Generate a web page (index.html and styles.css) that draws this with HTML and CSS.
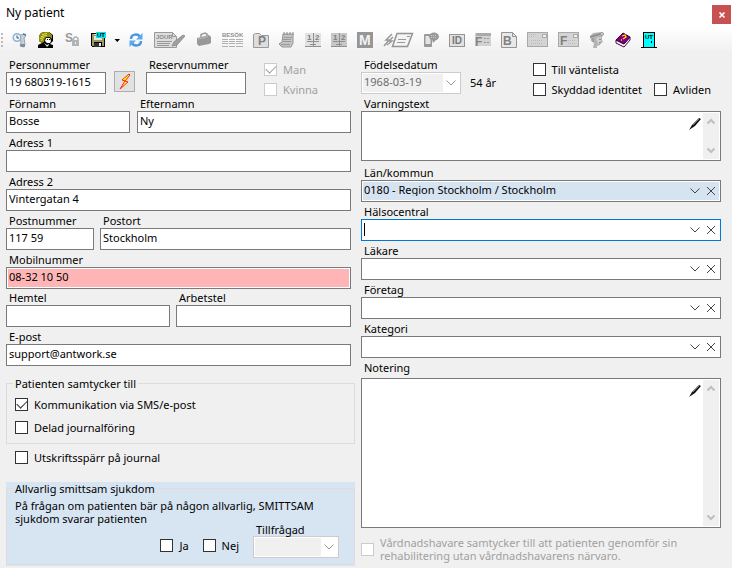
FILE: index.html
```html
<!DOCTYPE html>
<html lang="sv">
<head>
  <meta charset="UTF-8" />
  <meta name="viewport" content="width=device-width, initial-scale=1" />
  <title>Ny patient</title>
  <link rel="stylesheet" href="styles.css">
</head>
<body>

  <header class="titlebar">
    <h1>Ny patient</h1>
    <button class="close-btn" type="button" aria-label="Stäng">
      <svg width="6" height="6" viewBox="0 0 6 6"><path d="M.5 .5L5.500 5.500M5.500 .5L.5 5.500" stroke="#fff" stroke-width="1.700"/></svg>
    </button>
  </header>

  <nav class="toolbar" aria-label="Verktyg">
    <span class="grip"></span>
    <button type="button" aria-label="Tidbok">
      <svg width="16" height="16" viewBox="0 0 16 16">
        <path d="M8 3l4-1 2 2-2 2 1 6-1 3-4-1 1-3-1-6z" fill="#c9d0d9" stroke="#8b939e" stroke-width=".8"/>
        <path d="M8 12h5v3H9z" fill="#7d8fa8"/>
        <circle cx="5" cy="5.500" r="3.800" fill="#edf6fc" stroke="#8fb2d2" stroke-width="1.500"/>
        <path d="M5 3.500v2.500h2" fill="none" stroke="#456"/>
        <path d="M11 2l3 1" stroke="#4a78b0" stroke-width="1.500"/>
      </svg>
    </button>
    <button type="button" aria-label="Patient">
      <svg width="16" height="16" viewBox="0 0 16 16">
        <path d="M3 1l3-1h5l4 3v6l-2 2-1 1 3 1v3H0v-3l4-2-3-2V4z" fill="#000"/>
        <path d="M3 1l3-1h5l3 3v4l-2-2H9L7 6l-1 4-2 1-3-2V4z" fill="#8f8f10"/>
        <path d="M4 2.500l5-1M3 4.500l6-1M2 6.500l4-1M3 8.500l2-1" stroke="#e8df50"/>
        <path d="M8 6h4l1 3-1 2H9L7 9z" fill="#fff"/>
        <path d="M9 7.500h1M11 7.500h1" stroke="#000"/>
        <path d="M6 11l3 2 2-1v1l-2 2z" fill="#ddd"/>
      </svg>
    </button>
    <button type="button" aria-label="Spärr">
      <svg width="16" height="16" viewBox="0 0 16 16">
        <text x="1" y="10" class="glyph-l" fill="#999">S</text>
        <path d="M9.500 9V6.500l1.500-1.500h1.500L14 6.500V9" fill="none" stroke="#b0b0b0" stroke-width="1.500"/>
        <path d="M8 8h7v6H8z" fill="#b3b3b3"/><path d="M11 10h1v2h-1z" fill="#eee"/>
      </svg>
    </button>
    <span class="split">
      <button type="button" aria-label="Spara och avsluta">
        <svg width="16" height="16" viewBox="0 0 16 16" shape-rendering="crispEdges">
          <path d="M1 1h14v14H2l-1-1z" fill="#000"/>
          <path d="M2 2h2v12H2zM12 6h2v8h-2zM3 8h11v2H3z" fill="#9a9a60"/>
          <path d="M4 2h8v6H4z" fill="#e4e4e4"/><path d="M4 3h2v1H4z" fill="#999"/>
          <path d="M4 11h7v4H4z" fill="#333"/><path d="M9 11h2v3H9z" fill="#eee"/>
          <path d="M6 0h10v6H6z" fill="#00e5ee"/>
          <text x="7" y="5" class="glyph-s" fill="#000">UT</text>
        </svg>
      </button>
      <button type="button" aria-label="Fler sparval">
        <svg width="12" height="16" viewBox="0 0 12 16"><path d="M8.500 7H14L11.250 10z" fill="#000"/></svg>
      </button>
    </span>
    <button type="button" aria-label="Uppdatera">
      <svg width="16" height="16" viewBox="0 0 16 16">
        <path d="M3 7c0-5 7-6 9-2" fill="none" stroke="#4a97e2" stroke-width="2.500"/>
        <path d="M14.500 1v6.500H8z" fill="#5aa9ef"/>
        <path d="M13 9c0 5-7 6-9 2" fill="none" stroke="#4a97e2" stroke-width="2.500"/>
        <path d="M1.500 15V8.500H8z" fill="#5aa9ef"/>
      </svg>
    </button>
    <button type="button" aria-label="Journal">
      <svg width="32" height="16" viewBox="0 0 32 16">
        <path d="M.5 .5h18l4 4v11H.5z" fill="#ddd" stroke="#999"/>
        <path d="M18.500 .5v4h4" fill="none" stroke="#999"/>
        <text x="2" y="7" class="glyph-m" fill="#888">JOUR</text>
        <path d="M3 9.500h15M3 11.500h13M3 13.500h12" stroke="#999"/>
        <path d="M18 14l2-4 9-7 2 1-8 9z" fill="#a0a0a0" stroke="#858585" stroke-width=".8"/>
      </svg>
    </button>
    <button type="button" aria-label="Väska">
      <svg width="16" height="16" viewBox="0 0 16 16">
        <path d="M5 5V2.500l4-1.500 2 1v3" fill="none" stroke="#999" stroke-width="1.500"/>
        <path d="M1 6l12-3 2 2v6l-2 1-10 2-2-2z" fill="#999"/><path d="M2 7l10-2.500" stroke="#bbb"/>
      </svg>
    </button>
    <button type="button" aria-label="Besök">
      <svg width="21" height="16" viewBox="0 0 21 16" shape-rendering="crispEdges">
        <text x="0" y="5" class="glyph-m" fill="#909090">BESÖK</text>
        <path d="M0 7.500h6M7 7.500h6M14 7.500h7M0 9.500h6M7 9.500h6M14 9.500h7M0 11.500h6M7 11.500h6M14 11.500h7M0 14.500h6M7 14.500h6M14 14.500h7" stroke="#b0b0b0"/>
      </svg>
    </button>
    <button type="button" aria-label="Patientmapp">
      <svg width="16" height="16" viewBox="0 0 16 16">
        <path d="M.5 15.500v-13l2-1h4l2 2h7v12z" fill="#ddd" stroke="#999"/>
        <text x="5" y="13" class="glyph-l" fill="#808080">P</text>
      </svg>
    </button>
    <button type="button" aria-label="Anteckningar">
      <svg width="16" height="16" viewBox="0 0 16 16">
        <path d="M4 2h10v9l-2 4H3l-3-3 3-2z" fill="#c4c4c4" stroke="#949494"/>
        <path d="M5 0v3M8 0v3M11 0v3M14 0v3" stroke="#888"/>
        <path d="M5 5.500h8M4 7.500h8M4 9.500h8M2 12.500h9" stroke="#999"/>
      </svg>
    </button>
    <button type="button" aria-label="Mall 1">
      <svg width="16" height="16" viewBox="0 0 16 16" shape-rendering="crispEdges">
        <path d="M0 1h16v14H0z" fill="#e2e2e2"/><path d="M0 14.500h16M8 1v13M2 9.500h12M5 12.500h6" stroke="#909090"/>
        <text x="2" y="8" class="glyph-n" fill="#808080">1</text><text x="10" y="8" class="glyph-n" fill="#808080">2</text>
      </svg>
    </button>
    <button type="button" aria-label="Mall 2">
      <svg width="16" height="16" viewBox="0 0 16 16" shape-rendering="crispEdges">
        <path d="M0 1h16v14H0z" fill="#c8c8c8"/><path d="M0 14.500h16M8 1v13M2 9.500h12M5 12.500h6" stroke="#909090"/>
        <text x="2" y="8" class="glyph-n" fill="#808080">1</text><text x="10" y="8" class="glyph-n" fill="#808080">2</text>
      </svg>
    </button>
    <button type="button" aria-label="Medicin">
      <svg width="16" height="16" viewBox="0 0 16 16">
        <path d="M0 0h16v16H0z" fill="#969696"/><text x="2" y="13" class="glyph-xl" fill="#f2f2f2">M</text>
      </svg>
    </button>
    <button type="button" aria-label="Snabbmeddelande">
      <svg width="30" height="16" viewBox="0 0 30 16">
        <path d="M9 2L3 8h3l-5 6M10 5L6 9h3l-5 4" fill="none" stroke="#999" stroke-width="1.500"/>
        <path d="M14 1.500h15.500l-5 13H9.500z" fill="#f4f4f4" stroke="#949494" stroke-width="1.500"/>
        <path d="M15 7.500h8M14 10.500h8M24 4.500h3" stroke="#999"/>
      </svg>
    </button>
    <button type="button" aria-label="SMS">
      <svg width="16" height="16" viewBox="0 0 16 16">
        <rect x="1" y="2" width="8" height="13" rx="1" fill="#999"/>
        <path d="M2.500 4h5v8h-5z" fill="#e4e4e4"/>
        <ellipse cx="11" cy="4.500" rx="5" ry="4" fill="#999"/><path d="M9 7l1 4 4-4z" fill="#999"/>
        <path d="M8 3.500h6M8 5.500h5" stroke="#ccc" stroke-dasharray="1 1"/>
      </svg>
    </button>
    <button type="button" aria-label="Legitimation">
      <svg width="16" height="16" viewBox="0 0 16 16" shape-rendering="crispEdges">
        <path d="M.5 2.500h15v12H.5z" fill="#e2e2e2" stroke="#949494"/><text x="3" y="12" class="glyph-i" fill="#777">ID</text>
      </svg>
    </button>
    <button type="button" aria-label="Formulär">
      <svg width="16" height="16" viewBox="0 0 16 16" shape-rendering="crispEdges">
        <path d="M0 1h16v13H0z" fill="#d2d2d2"/><path d="M1 1h15v3H1z" fill="#aaa"/>
        <path d="M9 6.500h6M9 10.500h6" stroke="#999" stroke-dasharray="2 1"/>
        <text x="0" y="14" class="glyph-l" fill="#858585">F</text>
      </svg>
    </button>
    <button type="button" aria-label="Brev">
      <svg width="16" height="16" viewBox="0 0 16 16">
        <path d="M.5 .5h11l4 4v11H.5z" fill="#e8e8e8" stroke="#949494"/><path d="M11.500 .5v4h4" fill="none" stroke="#949494"/>
        <text x="2" y="13" class="glyph-l" fill="#808080">B</text>
      </svg>
    </button>
    <button type="button" aria-label="Kuvert">
      <svg width="21" height="16" viewBox="0 0 21 16" shape-rendering="crispEdges">
        <path d="M.5 .5h20v14H.5z" fill="#d4d4d4" stroke="#a8a8a8"/><path d="M15 2h4v3h-4z" fill="#eee" stroke="#aaa"/>
        <path d="M2 2.500h8M2 4.500h6M4 8.500h12M4 11.500h12" stroke="#bbb" stroke-dasharray="1 1"/>
      </svg>
    </button>
    <button type="button" aria-label="Formulärkuvert">
      <svg width="21" height="16" viewBox="0 0 21 16" shape-rendering="crispEdges">
        <path d="M.5 .5h20v14H.5z" fill="#d4d4d4" stroke="#a8a8a8"/><path d="M15 2h4v3h-4z" fill="#eee" stroke="#aaa"/>
        <path d="M10 8.500h8M10 11.500h8" stroke="#bbb" stroke-dasharray="1 1"/>
        <text x="2" y="13" class="glyph-l" fill="#808080">F</text>
      </svg>
    </button>
    <button type="button" aria-label="Läkare">
      <svg width="16" height="16" viewBox="0 0 16 16">
        <path d="M1 4l3-3 8-1 2 2-1 3v3l1 2-2 1-1 2-3 1v2H4l1-5-3-2z" fill="#b4b4b4"/>
        <path d="M1 5l10-3 3 1" fill="none" stroke="#8a8a8a" stroke-width="1.500"/><path d="M7 6l5-1v5l-3 2z" fill="#d0d0d0"/>
        <path d="M10 7.500h2M10 10.500h2M4 6v4" stroke="#8a8a8a"/>
        <circle cx="13" cy="2" r="1.500" fill="#ddd" stroke="#999"/>
      </svg>
    </button>
    <button type="button" aria-label="Hjälp">
      <svg width="16" height="16" viewBox="0 0 16 16">
        <path d="M1 8l8 4 6-7v3l-6 7-8-4z" fill="#fff" stroke="#400040"/>
        <path d="M1 8l7-7 7 4-6 7z" fill="#800080" stroke="#400040"/>
        <path d="M7 4l3-1 1 2-3 2M6 8h1" fill="none" stroke="#ffe000" stroke-width="1.300"/>
      </svg>
    </button>
    <button type="button" aria-label="Avsluta">
      <svg width="16" height="16" viewBox="0 0 16 16" shape-rendering="crispEdges">
        <path d="M2.500 .5h11v15h-11z" fill="#0ff" stroke="#000"/><path d="M0 15.500h16" stroke="#000"/>
        <text x="4" y="7" class="glyph-s" fill="#000">UT</text><path d="M10 9h1v2h-1z" fill="#000"/>
      </svg>
    </button>
  </nav>

  <form class="patient-form">

    <!-- Left column -->
    <div class="column column-left">
      <div class="row id-row">
        <div class="field w-100">
          <label for="pnr">Personnummer</label>
          <input type="text" id="pnr" value="19 680319-1615" />
        </div>
        <button class="fetch-btn" type="button" aria-label="Hämta uppgifter">
          <svg width="14" height="17" viewBox="0 0 14 17"><path d="M11 1L4 7l3 1-5 8 8-7-3-1 5-6z" fill="#ff0" stroke="#f22"/></svg>
        </button>
        <div class="field w-100">
          <label for="reserv">Reservnummer</label>
          <input type="text" id="reserv" />
        </div>
        <div class="checks sex">
          <label class="check"><input type="checkbox" checked disabled />Man</label>
          <label class="check"><input type="checkbox" disabled />Kvinna</label>
        </div>
      </div>

      <div class="row name-row">
        <div class="field">
          <label for="fornamn">Förnamn</label>
          <input type="text" id="fornamn" value="Bosse" />
        </div>
        <div class="field">
          <label for="efternamn">Efternamn</label>
          <input type="text" id="efternamn" value="Ny" />
        </div>
      </div>

      <div class="row">
        <div class="field">
          <label for="adress1">Adress 1</label>
          <input type="text" id="adress1" />
        </div>
      </div>

      <div class="row">
        <div class="field">
          <label for="adress2">Adress 2</label>
          <input type="text" id="adress2" value="Vintergatan 4" />
        </div>
      </div>

      <div class="row post-row">
        <div class="field">
          <label for="postnr">Postnummer</label>
          <input type="text" id="postnr" value="117 59" />
        </div>
        <div class="field">
          <label for="postort">Postort</label>
          <input type="text" id="postort" value="Stockholm" />
        </div>
      </div>

      <div class="row">
        <div class="field">
          <label for="mobil">Mobilnummer</label>
          <input type="text" id="mobil" class="invalid" value="08-32 10 50" />
        </div>
      </div>

      <div class="row tel-row">
        <div class="field">
          <label for="hemtel">Hemtel</label>
          <input type="text" id="hemtel" />
        </div>
        <div class="field">
          <label for="arbetstel">Arbetstel</label>
          <input type="text" id="arbetstel" />
        </div>
      </div>

      <div class="row">
        <div class="field">
          <label for="epost">E-post</label>
          <input type="text" id="epost" value="support@antwork.se" />
        </div>
      </div>

      <fieldset class="consent">
        <legend>Patienten samtycker till</legend>
        <label class="check"><input type="checkbox" checked />Kommunikation via SMS/e-post</label>
        <label class="check"><input type="checkbox" />Delad journalföring</label>
      </fieldset>

      <label class="check print-lock"><input type="checkbox" />Utskriftsspärr på journal</label>

      <div class="disease">
        <fieldset>
          <legend>Allvarlig smittsam sjukdom</legend>
          <p>På frågan om patienten bär på någon allvarlig, SMITTSAM sjukdom svarar patienten</p>
          <div class="answers">
            <label class="check"><input type="checkbox" />Ja</label>
            <label class="check"><input type="checkbox" />Nej</label>
            <div class="field asked">
              <label for="tillfragad">Tillfrågad</label>
              <div class="combo disabled">
                <select id="tillfragad" disabled><option></option></select>
                <span class="arrow"><svg width="10" height="6" viewBox="0 0 10 6"><path d="M.5 .5L5 5 9.500 .5"/></svg></span>
              </div>
            </div>
          </div>
        </fieldset>
      </div>
    </div>

    <!-- Right column -->
    <div class="column">
      <div class="row birth-row">
        <div class="field w-100">
          <label for="fodd">Födelsedatum</label>
          <div class="combo disabled">
            <select id="fodd" disabled><option>1968-03-19</option></select>
            <span class="arrow"><svg width="10" height="6" viewBox="0 0 10 6"><path d="M.5 .5L5 5 9.500 .5"/></svg></span>
          </div>
        </div>
        <span class="age">54 år</span>
        <div class="checks status">
          <label class="check"><input type="checkbox" />Till väntelista</label>
          <div class="check-pair">
            <label class="check"><input type="checkbox" />Skyddad identitet</label>
            <label class="check"><input type="checkbox" />Avliden</label>
          </div>
        </div>
      </div>

      <div class="field">
        <label for="varning">Varningstext</label>
        <div class="memo memo-warning">
          <textarea id="varning"></textarea>
          <button class="pen" type="button" aria-label="Redigera varningstext">
            <svg width="14" height="14" viewBox="0 0 14 14"><path d="M1 13l3-5 7-7 2 1-6 7z" fill="#111"/><path d="M5 8l6-6" stroke="#777"/></svg>
          </button>
          <span class="scrollbar">
            <svg width="8" height="5" viewBox="0 0 8 5"><path d="M.5 4.500L4 1l3.500 3.500"/></svg>
            <svg width="8" height="5" viewBox="0 0 8 5"><path d="M.5 .5L4 4 7.500 .5"/></svg>
          </span>
        </div>
      </div>

      <div class="field region">
        <label for="lan">Län/kommun</label>
        <div class="combo filled">
          <select id="lan"><option>0180 - Region Stockholm / Stockholm</option></select>
          <span class="arrow"><svg width="10" height="6" viewBox="0 0 10 6"><path d="M.5 .5L5 5 9.500 .5"/></svg></span>
          <button class="clear" type="button" aria-label="Rensa"><svg width="8" height="8" viewBox="0 0 8 8"><path d="M0 0l8 8M8 0L0 8"/></svg></button>
        </div>
      </div>

      <div class="field">
        <label for="halsocentral">Hälsocentral</label>
        <div class="combo active">
          <span class="caret"></span>
          <input type="text" id="halsocentral" />
          <span class="arrow"><svg width="10" height="6" viewBox="0 0 10 6"><path d="M.5 .5L5 5 9.500 .5"/></svg></span>
          <button class="clear" type="button" aria-label="Rensa"><svg width="8" height="8" viewBox="0 0 8 8"><path d="M0 0l8 8M8 0L0 8"/></svg></button>
        </div>
      </div>

      <div class="field">
        <label for="lakare">Läkare</label>
        <div class="combo">
          <select id="lakare"><option></option></select>
          <span class="arrow"><svg width="10" height="6" viewBox="0 0 10 6"><path d="M.5 .5L5 5 9.500 .5"/></svg></span>
          <button class="clear" type="button" aria-label="Rensa"><svg width="8" height="8" viewBox="0 0 8 8"><path d="M0 0l8 8M8 0L0 8"/></svg></button>
        </div>
      </div>

      <div class="field">
        <label for="foretag">Företag</label>
        <div class="combo">
          <select id="foretag"><option></option></select>
          <span class="arrow"><svg width="10" height="6" viewBox="0 0 10 6"><path d="M.5 .5L5 5 9.500 .5"/></svg></span>
          <button class="clear" type="button" aria-label="Rensa"><svg width="8" height="8" viewBox="0 0 8 8"><path d="M0 0l8 8M8 0L0 8"/></svg></button>
        </div>
      </div>

      <div class="field">
        <label for="kategori">Kategori</label>
        <div class="combo">
          <select id="kategori"><option></option></select>
          <span class="arrow"><svg width="10" height="6" viewBox="0 0 10 6"><path d="M.5 .5L5 5 9.500 .5"/></svg></span>
          <button class="clear" type="button" aria-label="Rensa"><svg width="8" height="8" viewBox="0 0 8 8"><path d="M0 0l8 8M8 0L0 8"/></svg></button>
        </div>
      </div>

      <div class="field note">
        <label for="notering">Notering</label>
        <div class="memo memo-note">
          <textarea id="notering"></textarea>
          <button class="pen" type="button" aria-label="Redigera notering">
            <svg width="14" height="14" viewBox="0 0 14 14"><path d="M1 13l3-5 7-7 2 1-6 7z" fill="#111"/><path d="M5 8l6-6" stroke="#777"/></svg>
          </button>
          <span class="scrollbar">
            <svg width="8" height="5" viewBox="0 0 8 5"><path d="M.5 4.500L4 1l3.500 3.500"/></svg>
            <svg width="8" height="5" viewBox="0 0 8 5"><path d="M.5 .5L4 4 7.500 .5"/></svg>
          </span>
        </div>
      </div>

      <label class="check guardian"><input type="checkbox" disabled /><span>Vårdnadshavare samtycker till att patienten genomför sin rehabilitering utan vårdnadshavarens närvaro.</span></label>
    </div>

  </form>

</body>
</html>
```
FILE: styles.css
```css
/* Reset + base */
* {
  box-sizing: border-box;
}
body {
  margin: 0;
  font-family: 'Noto Sans', 'Open Sans', sans-serif;
  font-size: 11px;
  line-height: 13px;
  background: #f0f0f0;
  color: #000;
}

input,
select,
textarea,
button {
  font: inherit;
  color: inherit;
  margin: 0;
}

button {
  display: flex;
  align-items: center;
  justify-content: center;
  padding: 0;
  border: none;
  background: none;
}

svg {
  display: block;
  overflow: visible;
}

/* Title bar */
.titlebar {
  display: flex;
  justify-content: space-between;
  align-items: flex-start;
  height: 28px;
  padding: 5px 1px 0 6px;
  background: #fff;
}

.titlebar h1 {
  margin: 0;
  font-size: 12px;
  font-weight: 400;
  line-height: 16px;
}

.close-btn {
  width: 19px;
  height: 19px;
  background: #c75050;
}

/* Toolbar */
.toolbar {
  display: flex;
  align-items: center;
  gap: 10px;
  height: 24px;
  padding-left: 1px;
  background: linear-gradient(#fff, #f0f0f0);
}

.toolbar button {
  flex: none;
}

.grip {
  width: 2px;
  height: 15px;
  margin-right: -1px;
  background: repeating-linear-gradient(#bbb 0 2px, transparent 2px 4px);
}

.split {
  display: flex;
}

.glyph-s {
  font: bold 6px 'Liberation Sans', sans-serif;
}
.glyph-m {
  font: bold 6px 'Liberation Sans', sans-serif;
}
.glyph-n {
  font: bold 8px 'Liberation Sans', sans-serif;
}
.glyph-i {
  font: bold 10px 'Liberation Sans', sans-serif;
}
.glyph-l {
  font: bold 12px 'Liberation Sans', sans-serif;
}
.glyph-xl {
  font: bold 14px 'Liberation Sans', sans-serif;
}

/* Form layout */
.patient-form {
  display: grid;
  grid-template-columns: 349fr 360fr;
  gap: 6px;
  padding: 3px 11px 2px 6px;
}

.column {
  min-width: 0;
}

.row {
  display: grid;
}
.column-left .row {
  margin-right: 4px;
}

.name-row {
  grid-template-columns: 124fr 214fr;
  gap: 7px;
}
.post-row {
  grid-template-columns: 88fr 251fr;
  gap: 6px;
}
.tel-row {
  grid-template-columns: 164fr 175fr;
  gap: 6px;
  margin-top: -1px;
}

.id-row,
.birth-row {
  display: flex;
  align-items: flex-end;
}

.w-100 {
  width: 100px;
}

/* Fields */
.field > label {
  display: block;
  padding: 3px 3px 1px;
}

.field > input {
  display: block;
  width: 100%;
  height: 22px;
  padding: 0 2px 3px;
  border: 1px solid #7a7a7a;
  background: #fff;
  outline: none;
}

.field > input.invalid {
  background: #ffb5b5;
  box-shadow: inset 0 0 0 1px #fff;
}

.fetch-btn {
  width: 21px;
  height: 21px;
  margin: 0 11px 2px 8px;
  border: 1px solid #adadad;
  background: #e1e1e1;
}

/* Check boxes */
.check {
  display: flex;
  align-items: center;
  gap: 6px;
}

.check input {
  appearance: none;
  flex: none;
  display: grid;
  place-items: center;
  width: 13px;
  height: 13px;
  border: 1px solid #333;
  background: #fff;
}
.check input:checked::before {
  content: '';
  width: 9px;
  height: 5px;
  margin-bottom: 3px;
  border: solid #333;
  border-width: 0 0 1px 1px;
  transform: rotate(-45deg);
}
.check input:disabled {
  border-color: #ccc;
}
.check input:disabled:checked::before {
  border-color: #a0a0a0;
}
.check:has(input:disabled) {
  color: #a0a0a0;
}

.checks {
  display: grid;
  gap: 7px;
  align-self: flex-start;
  padding-top: 8px;
}
.sex {
  margin: 0 0 -2px 18px;
}
.status {
  margin: 0 10px -2px auto;
}
.check-pair {
  display: flex;
  gap: 12px;
}

.age {
  padding: 0 0 5px 9px;
}

/* Combo boxes */
.combo {
  display: flex;
  align-items: center;
  height: 22px;
  padding: 1px;
  border: 1px solid #7a7a7a;
  background: #fff;
}

.combo select,
.combo input {
  appearance: none;
  flex: 1;
  min-width: 0;
  height: 18px;
  padding: 0 1px 3px;
  border: none;
  background: transparent;
  outline: none;
}

.combo.filled {
  background: #d6e3f1;
  box-shadow: inset 0 0 0 1px #fff;
}
.combo.active {
  border-color: #0078d7;
}

.combo path {
  fill: none;
  stroke: #444;
}

.arrow {
  display: flex;
  align-items: center;
  justify-content: center;
  width: 16px;
  height: 100%;
}
.clear {
  width: 16px;
  height: 18px;
}

.caret {
  width: 1px;
  height: 13px;
  margin: 0 0 2px 1px;
  background: #000;
}

.combo.disabled {
  border-color: #ccc;
  background: #f0f0f0;
  box-shadow: inset 0 0 0 1px #fff;
}
.combo.disabled select {
  color: #6d6d6d;
  opacity: 1;
}
.combo.disabled .arrow {
  background: #fff;
}
.combo.disabled path {
  stroke: #999;
}

/* Memo boxes */
.memo {
  display: flex;
  align-items: flex-start;
  padding: 1px;
  border: 1px solid #7a7a7a;
  background: #fff;
}
.memo-warning {
  height: 50px;
}
.memo-note {
  height: 150px;
}

.memo textarea {
  flex: 1;
  min-width: 0;
  height: 100%;
  padding: 2px;
  border: none;
  outline: none;
  resize: none;
  background: transparent;
}

.pen {
  margin: 4px 1px 0 0;
}

.scrollbar {
  display: flex;
  flex-direction: column;
  justify-content: space-between;
  align-items: center;
  width: 16px;
  height: 100%;
  padding: 6px 0;
  background: #f0f0f0;
}
.scrollbar path {
  fill: none;
  stroke: #bfbfbf;
  stroke-width: 2;
}

.region {
  margin-top: 2px;
}

.note > label {
  padding-bottom: 4px;
}

.guardian {
  margin-top: 8px;
}

/* Group boxes */
fieldset {
  min-width: 0;
  margin: 0;
  border: 1px solid #dcdcdc;
}
legend {
  padding: 0 2px;
}

.consent {
  display: grid;
  gap: 10px;
  margin-top: 11px;
  padding: 8px 8px 9px 8px;
}
.consent legend,
.disease legend {
  margin-left: -2px;
}

.print-lock {
  margin: 7px 0 0 9px;
}

.disease {
  margin-top: 18px;
  padding-bottom: 1px;
  background: #d7e5f3;
}
.disease fieldset {
  padding: 4px 15px 6px 8px;
}
.disease p {
  margin: 0;
}

.answers {
  display: flex;
  justify-content: flex-end;
  align-items: flex-end;
  gap: 14px;
  margin-top: -2px;
}
.answers > .check {
  padding-bottom: 6px;
}
.asked {
  width: 86px;
}
.asked > label {
  padding: 0 3px;
}
```
